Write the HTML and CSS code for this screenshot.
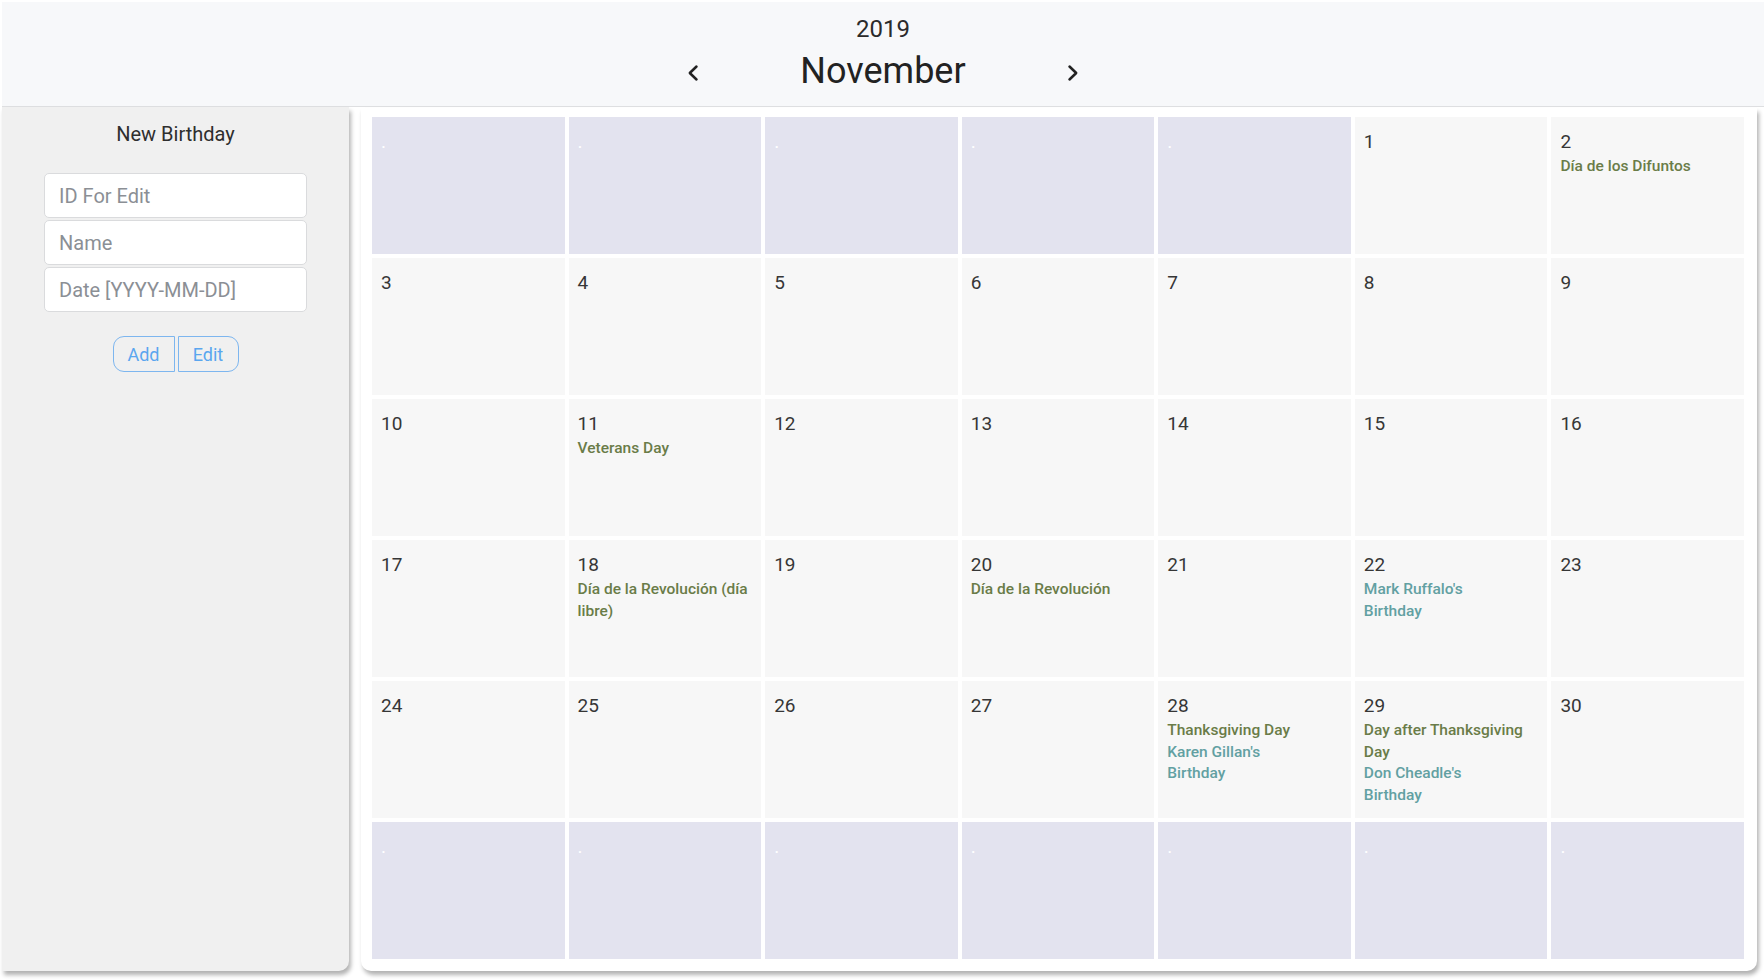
FILE: index.html
```html
<!DOCTYPE html>
<html lang="en">
<head>
<meta charset="utf-8">
<title>Birthday Calendar</title>
<link rel="stylesheet" href="styles.css">
</head>
<body>
<div class="app">
  <header class="top">
    <div class="year">2019</div>
    <div class="nav">
      <button class="arrow" aria-label="Previous month">
        <svg width="12" height="18" viewBox="0 0 12 18"><polyline points="9.5,2.5 2.8,9 9.5,15.5" fill="none" stroke="#222" stroke-width="2.5" stroke-linecap="round" stroke-linejoin="round"/></svg>
      </button>
      <div class="month">November</div>
      <button class="arrow" aria-label="Next month">
        <svg width="12" height="18" viewBox="0 0 12 18"><polyline points="2.5,2.5 9.2,9 2.5,15.5" fill="none" stroke="#222" stroke-width="2.5" stroke-linecap="round" stroke-linejoin="round"/></svg>
      </button>
    </div>
  </header>
  <main class="main">
    <aside class="side">
      <h2 class="side-title">New Birthday</h2>
      <div class="form">
        <input class="field" type="text" placeholder="ID For Edit">
        <input class="field" type="text" placeholder="Name">
        <input class="field" type="text" placeholder="Date [YYYY-MM-DD]">
      </div>
      <div class="btns">
        <button class="btn btn-add">Add</button>
        <button class="btn btn-edit">Edit</button>
      </div>
    </aside>
    <section class="card">
      <div class="grid">
        <div class="cell empty"><div class="num">.</div></div>
        <div class="cell empty"><div class="num">.</div></div>
        <div class="cell empty"><div class="num">.</div></div>
        <div class="cell empty"><div class="num">.</div></div>
        <div class="cell empty"><div class="num">.</div></div>
        <div class="cell"><div class="num">1</div></div>
        <div class="cell"><div class="num">2</div><div class="events"><div class="hol">Día de los Difuntos</div></div></div>

        <div class="cell"><div class="num">3</div></div>
        <div class="cell"><div class="num">4</div></div>
        <div class="cell"><div class="num">5</div></div>
        <div class="cell"><div class="num">6</div></div>
        <div class="cell"><div class="num">7</div></div>
        <div class="cell"><div class="num">8</div></div>
        <div class="cell"><div class="num">9</div></div>

        <div class="cell"><div class="num">10</div></div>
        <div class="cell"><div class="num">11</div><div class="events"><div class="hol">Veterans Day</div></div></div>
        <div class="cell"><div class="num">12</div></div>
        <div class="cell"><div class="num">13</div></div>
        <div class="cell"><div class="num">14</div></div>
        <div class="cell"><div class="num">15</div></div>
        <div class="cell"><div class="num">16</div></div>

        <div class="cell"><div class="num">17</div></div>
        <div class="cell"><div class="num">18</div><div class="events"><div class="hol">Día de la Revolución (día libre)</div></div></div>
        <div class="cell"><div class="num">19</div></div>
        <div class="cell"><div class="num">20</div><div class="events"><div class="hol">Día de la Revolución</div></div></div>
        <div class="cell"><div class="num">21</div></div>
        <div class="cell"><div class="num">22</div><div class="events"><div class="hol bday">Mark Ruffalo's Birthday</div></div></div>
        <div class="cell"><div class="num">23</div></div>

        <div class="cell"><div class="num">24</div></div>
        <div class="cell"><div class="num">25</div></div>
        <div class="cell"><div class="num">26</div></div>
        <div class="cell"><div class="num">27</div></div>
        <div class="cell"><div class="num">28</div><div class="events"><div class="hol">Thanksgiving Day</div><div class="hol bday">Karen Gillan's Birthday</div></div></div>
        <div class="cell"><div class="num">29</div><div class="events"><div class="hol">Day after Thanksgiving Day</div><div class="hol bday">Don Cheadle's Birthday</div></div></div>
        <div class="cell"><div class="num">30</div></div>

        <div class="cell empty"><div class="num">.</div></div>
        <div class="cell empty"><div class="num">.</div></div>
        <div class="cell empty"><div class="num">.</div></div>
        <div class="cell empty"><div class="num">.</div></div>
        <div class="cell empty"><div class="num">.</div></div>
        <div class="cell empty"><div class="num">.</div></div>
        <div class="cell empty"><div class="num">.</div></div>
      </div>
    </section>
  </main>
</div>
</body>
</html>
```
FILE: styles.css
```css
* {
  box-sizing: border-box;
}

html,
body {
  margin: 0;
  background: #ffffff;
}

body {
  padding: 2px 0 0 2px;
  height: 980px;
  overflow: hidden;
  font-family: Roboto, "Liberation Sans", sans-serif;
  color: #333333;
}

.top {
  height: 105px;
  padding-top: 13px;
  background: #f7f8fa;
  border-bottom: 1px solid #dedfe1;
  text-align: center;
  color: #222222;
}

.year {
  font-size: 24px;
  line-height: 28px;
  color: #2b2b2b;
}

.nav {
  margin-top: 6px;
  display: flex;
  justify-content: center;
  align-items: center;
}

.month {
  width: 360px;
  font-size: 36px;
  line-height: 44px;
  color: #222222;
}

.arrow {
  width: 20px;
  height: 44px;
  padding: 3px 0 0;
  border: 0;
  background: none;
  display: flex;
  align-items: center;
  justify-content: center;
}

.main {
  display: flex;
  align-items: stretch;
}

.side {
  width: 347px;
  flex: none;
  padding-top: 15px;
  background: #f0f0f0;
  border-radius: 0 0 10px 0;
  box-shadow: 2px 4px 4px rgba(0, 0, 0, 0.3);
  display: flex;
  flex-direction: column;
  align-items: center;
}

.side-title {
  margin: 0;
  font-size: 20px;
  line-height: 24px;
  font-weight: 400;
  color: #2e2e2e;
}

.form {
  margin-top: 27px;
  display: flex;
  flex-direction: column;
  gap: 2px;
}

.field {
  width: 263px;
  height: 45px;
  padding: 0 14px;
  border: 1px solid #dadbdd;
  border-radius: 5px;
  background: #ffffff;
  font-family: Roboto, "Liberation Sans", sans-serif;
  font-size: 20px;
  color: #333333;
  outline: none;
}

.field::placeholder {
  color: #8b8f95;
}

.btns {
  margin-top: 24px;
  display: flex;
  gap: 3px;
}

.btn {
  height: 36px;
  padding: 0;
  border: 1.5px solid #7db6ef;
  background: transparent;
  font-family: Roboto, "Liberation Sans", sans-serif;
  font-size: 18px;
  color: #5aa6ef;
}

.btn-add {
  width: 62px;
  border-radius: 11px 0 0 11px;
}

.btn-edit {
  width: 61px;
  border-radius: 0 11px 11px 0;
}

.card {
  flex: 1;
  margin: 1px 7px 0 12px;
  padding: 9px 13px 12px 11px;
  background: #ffffff;
  border-radius: 0 0 10px 10px;
  box-shadow: 2px 4px 4px rgba(0, 0, 0, 0.3);
}

.grid {
  display: grid;
  grid-template-columns: repeat(7, 1fr);
  grid-auto-rows: 137px;
  gap: 4px;
}

.cell {
  padding: 14px 4px 0 9px;
  background: #f7f7f7;
  min-width: 0;
}

.cell.empty {
  background: #e3e3ef;
}

.num {
  font-size: 19px;
  line-height: 22px;
  color: #363636;
}

.empty .num {
  color: #ffffff;
}

.events {
  margin-top: 3px;
}

.hol {
  font-size: 15.5px;
  line-height: 21.5px;
  font-weight: 500;
  color: #6a7c48;
}

.hol.bday {
  max-width: 125px;
  color: #62a0a2;
}
```
